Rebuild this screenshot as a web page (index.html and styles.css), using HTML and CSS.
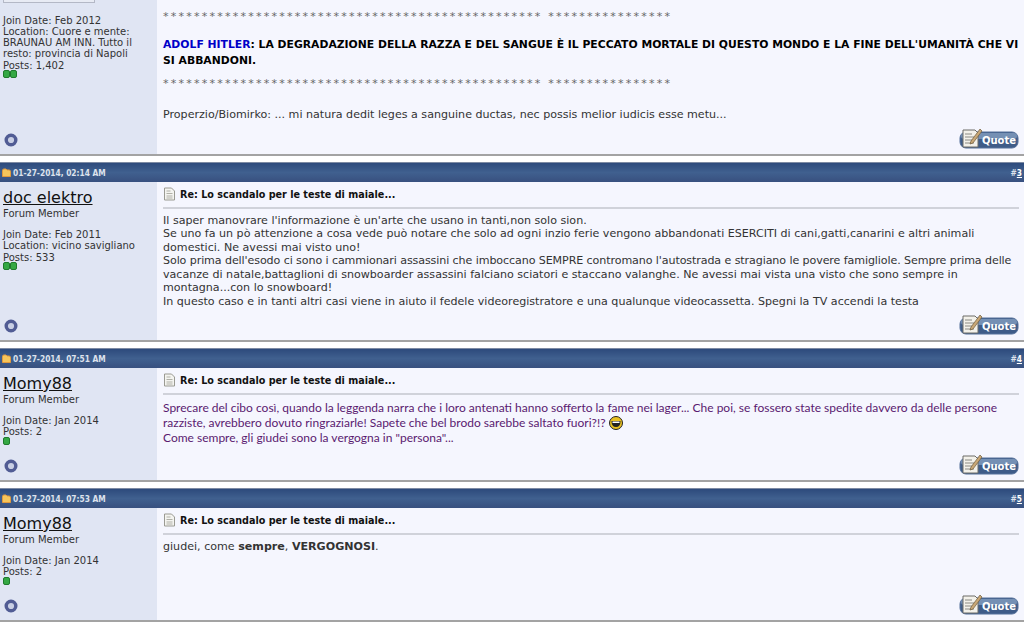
FILE: index.html
```html
<!DOCTYPE html>
<html lang="en">
<head>
  <meta charset="UTF-8" />
  <title>Lo scandalo per le teste di maiale</title>
  <link rel="stylesheet" href="styles.css">
</head>
<body>

  <svg class="defs" width="0" height="0">
    <symbol id="online" viewBox="0 0 14 14">
      <circle cx="7" cy="7" r="4.800" fill="#c9cfe4" stroke="#515c94" stroke-width="3.400"/>
    </symbol>
    <symbol id="doc" viewBox="0 0 13 14">
      <path d="M1.500 1h7l3 3v9h-10z" fill="#f4f4f0" stroke="#9a9a92"/>
      <path d="M3.500 4h4M3.500 6.500h6M3.500 9h6M3.500 11h6" stroke="#b0b0a8"/>
    </symbol>
    <symbol id="quote-bg" viewBox="0 0 60 20">
      <rect x="1" y="3" width="58" height="16" rx="6" fill="#3f5c88" stroke="#55709a"/>
      <rect x="2" y="4" width="56" height="6" rx="3" fill="#7590b4"/>
      <path d="M4 1h12l3 3v14h-15z" fill="#f3f1ea" stroke="#6d6d68"/>
      <path d="M6 5h7M6 8h9M6 11h9M6 14h9" stroke="#8a8a84"/>
      <path d="M21 0l2 2-9 12-3 1 1-3z" fill="#c9a877" stroke="#6e5a3a" stroke-width=".7"/>
    </symbol>
    <symbol id="pip" viewBox="0 0 7 8">
      <rect x=".5" y=".5" width="6" height="7" rx="1.500" fill="#35a844" stroke="#1f7a2c"/>
    </symbol>
    <symbol id="folder" viewBox="0 0 9 9">
      <path d="M.5 2.500q0-1.500 1.500-1.500h2l1 1h2q1.500 0 1.500 1.500v5h-8z" fill="#f6c65c" stroke="#e39a3c"/>
    </symbol>
    <symbol id="grin" viewBox="0 0 14 14">
      <circle cx="7" cy="7" r="6.500" fill="#e8c020" stroke="#222"/>
      <path d="M2.500 5h9q0 6-4.500 6t-4.500-6z" fill="#222"/>
      <path d="M3.500 5.500h7v1.500h-7z" fill="#fff"/>
    </symbol>
  </svg>

  <!-- post 2, scrolled off the top -->
  <div class="post post-first">
    <div class="post-body">
      <div class="user-cell">
        <div class="cut-box"></div>
        <div class="user-info first-info">
          <div>Join Date: Feb 2012</div>
          <div>Location: Cuore e mente: BRAUNAU AM INN. Tutto il resto: provincia di Napoli</div>
          <div>Posts: 1,402</div>
          <div class="rep"><svg class="pip"><use href="#pip"/></svg><svg class="pip"><use href="#pip"/></svg></div>
        </div>
        <svg class="online"><use href="#online"/></svg>
      </div>
      <div class="msg-cell">
        <div class="message first-message">
          <p class="stars">************************************************* ****************</p>
          <p class="shout"><span class="blue">ADOLF HITLER</span>: LA DEGRADAZIONE DELLA RAZZA E DEL SANGUE È IL PECCATO MORTALE DI QUESTO MONDO E LA FINE DELL'UMANITÀ CHE VI SI ABBANDONI.</p>
          <p class="stars stars-end">************************************************* ****************</p>
          <p class="sign">Properzio/Biomirko: ... mi natura dedit leges a sanguine ductas, nec possis melior iudicis esse metu...</p>
        </div>
        <div class="quote"><svg class="quote-bg"><use href="#quote-bg"/></svg><span class="quote-text">Quote</span></div>
      </div>
    </div>
  </div>

  <div class="post">
    <div class="post-head">
      <span class="date"><svg class="folder"><use href="#folder"/></svg>01-27-2014, 02:14 AM</span>
      <span class="num">#<a href="#">3</a></span>
    </div>
    <div class="post-body body-tall">
      <div class="user-cell">
        <a class="username" href="#">doc elektro</a>
        <div class="user-title">Forum Member</div>
        <div class="user-info">
          <div>Join Date: Feb 2011</div>
          <div>Location: vicino savigliano</div>
          <div>Posts: 533</div>
          <div class="rep"><svg class="pip"><use href="#pip"/></svg><svg class="pip"><use href="#pip"/></svg></div>
        </div>
        <svg class="online"><use href="#online"/></svg>
      </div>
      <div class="msg-cell">
        <div class="msg-title"><svg class="doc"><use href="#doc"/></svg>Re: Lo scandalo per le teste di maiale...</div>
        <div class="message">
          Il saper manovrare l'informazione è un'arte che usano in tanti,non solo sion.<br>
          Se uno fa un pò attenzione a cosa vede può notare che solo ad ogni inzio ferie vengono abbandonati ESERCITI di cani,gatti,canarini e altri animali<br>
          domestici. Ne avessi mai visto uno!<br>
          <span class="squeeze">Solo prima dell'esodo ci sono i cammionari assassini che imboccano SEMPRE contromano l'autostrada e stragiano le povere famigliole. Sempre prima delle</span><br>
          vacanze di natale,battaglioni di snowboarder assassini falciano sciatori e staccano valanghe. Ne avessi mai vista una visto che sono sempre in<br>
          montagna...con lo snowboard!<br>
          In questo caso e in tanti altri casi viene in aiuto il fedele videoregistratore e una qualunque videocassetta. Spegni la TV accendi la testa
        </div>
        <div class="quote"><svg class="quote-bg"><use href="#quote-bg"/></svg><span class="quote-text">Quote</span></div>
      </div>
    </div>
  </div>

  <div class="post">
    <div class="post-head">
      <span class="date"><svg class="folder"><use href="#folder"/></svg>01-27-2014, 07:51 AM</span>
      <span class="num">#<a href="#">4</a></span>
    </div>
    <div class="post-body">
      <div class="user-cell">
        <a class="username" href="#">Momy88</a>
        <div class="user-title">Forum Member</div>
        <div class="user-info">
          <div>Join Date: Jan 2014</div>
          <div>Posts: 2</div>
          <div class="rep"><svg class="pip"><use href="#pip"/></svg></div>
        </div>
        <svg class="online"><use href="#online"/></svg>
      </div>
      <div class="msg-cell">
        <div class="msg-title"><svg class="doc"><use href="#doc"/></svg>Re: Lo scandalo per le teste di maiale...</div>
        <div class="message comic">
          Sprecare del cibo così, quando la leggenda narra che i loro antenati hanno sofferto la fame nei lager... Che poi, se fossero state spedite davvero da delle persone<br>
          razziste, avrebbero dovuto ringraziarle! Sapete che bel brodo sarebbe saltato fuori?!? <svg class="grin"><use href="#grin"/></svg><br>
          Come sempre, gli giudei sono la vergogna in "persona"...
        </div>
        <div class="quote"><svg class="quote-bg"><use href="#quote-bg"/></svg><span class="quote-text">Quote</span></div>
      </div>
    </div>
  </div>

  <div class="post">
    <div class="post-head">
      <span class="date"><svg class="folder"><use href="#folder"/></svg>01-27-2014, 07:53 AM</span>
      <span class="num">#<a href="#">5</a></span>
    </div>
    <div class="post-body">
      <div class="user-cell">
        <a class="username" href="#">Momy88</a>
        <div class="user-title">Forum Member</div>
        <div class="user-info">
          <div>Join Date: Jan 2014</div>
          <div>Posts: 2</div>
          <div class="rep"><svg class="pip"><use href="#pip"/></svg></div>
        </div>
        <svg class="online"><use href="#online"/></svg>
      </div>
      <div class="msg-cell">
        <div class="msg-title"><svg class="doc"><use href="#doc"/></svg>Re: Lo scandalo per le teste di maiale...</div>
        <div class="message">giudei, come <b>sempre</b>, <b>VERGOGNOSI</b>.</div>
        <div class="quote"><svg class="quote-bg"><use href="#quote-bg"/></svg><span class="quote-text">Quote</span></div>
      </div>
    </div>
  </div>

</body>
</html>
```

FILE: styles.css
```css
html, body {
  overflow: hidden;
}
body {
  margin: 0;
  height: 623px;
  background: #fff;
  color: #333;
  font-family: "DejaVu Sans", Verdana, sans-serif;
  font-size: 10px;
}
.defs {
  position: absolute;
}
.post {
  margin-bottom: 6px;
}
.post-head {
  display: flex;
  justify-content: space-between;
  align-items: center;
  height: 19px;
  padding: 0 2px;
  background: linear-gradient(#2d4a7c, #40608f 50%, #38507f);
  border-top: 1px solid #7d8aa3;
  color: #dde2ec;
  font-family: "DejaVu Sans Condensed", "DejaVu Sans", sans-serif;
  font-size: 8.300px;
  font-weight: bold;
}
.date {
  display: flex;
  align-items: center;
}
.num a {
  color: #fff;
}
.post-body {
  display: grid;
  grid-template-columns: 157px minmax(0, 1fr);
  height: 112px;
  border-bottom: 2px solid #a3a3a3;
}
.body-tall {
  height: 158px;
}
.post-first .post-body {
  height: 154px;
}
.user-cell {
  display: flex;
  flex-direction: column;
  min-height: 0;
  padding: 0 3px 7px;
  background: #e0e5f3;
}
.msg-cell {
  display: flex;
  flex-direction: column;
  min-height: 0;
  padding: 5px 5px 5px 6px;
  background: #f5f6fe;
}
.cut-box {
  width: 90px;
  height: 2px;
  background: #e8ebf4;
  border: 1px solid #b4b8c6;
  border-top: none;
}
.username {
  margin-top: 6px;
  color: #111;
  font-size: 16px;
  line-height: 19px;
}
.user-title {
  line-height: 14px;
}
.user-info {
  margin-top: 8px;
  line-height: 11.300px;
}
.first-info {
  margin-top: 11.500px;
}
.rep {
  display: flex;
  height: 8px;
  margin-top: -1px;
}
.pip {
  width: 7px;
  height: 8px;
}
.online {
  width: 14px;
  height: 14px;
  margin: auto 0 0 1px;
}
.msg-title {
  display: flex;
  align-items: center;
  padding-bottom: 6px;
  border-bottom: 2px solid #d0d2da;
  color: #111;
  font-size: 9.650px;
  font-weight: bold;
}
.doc {
  width: 13px;
  height: 14px;
  margin-right: 4px;
}
.message {
  margin-top: 5px;
  color: #333;
  font-size: 11.100px;
  line-height: 13.450px;
}
.squeeze {
  letter-spacing: -0.1px;
}
.message p {
  margin: 0 0 14px;
}
.first-message {
  margin-top: 5px;
}
.message .stars-end {
  margin-bottom: 17px;
}
.message .shout {
  margin-bottom: 9px;
}
.message .sign {
  margin-bottom: 0;
}
.stars {
  color: #666;
  letter-spacing: 2.200px;
}
.shout {
  color: #000;
  font-size: 10.800px;
  font-weight: bold;
  line-height: 15.500px;
}
.blue {
  color: #0000c8;
}
.comic {
  margin-top: 5px;
  color: #5a1a70;
  font-family: Lato, sans-serif;
  font-size: 12px;
  line-height: 15px;
}
.grin {
  width: 14px;
  height: 14px;
  vertical-align: -3px;
}
.folder {
  width: 9px;
  height: 9px;
  margin-right: 2px;
}
.quote {
  position: relative;
  align-self: flex-end;
  width: 60px;
  height: 20px;
  margin-top: auto;
}
.quote-bg {
  display: block;
  width: 60px;
  height: 20px;
}
.quote-text {
  position: absolute;
  left: 23px;
  top: 5px;
  color: #fff;
  font-size: 10px;
  font-weight: bold;
  line-height: 13px;
}
```
